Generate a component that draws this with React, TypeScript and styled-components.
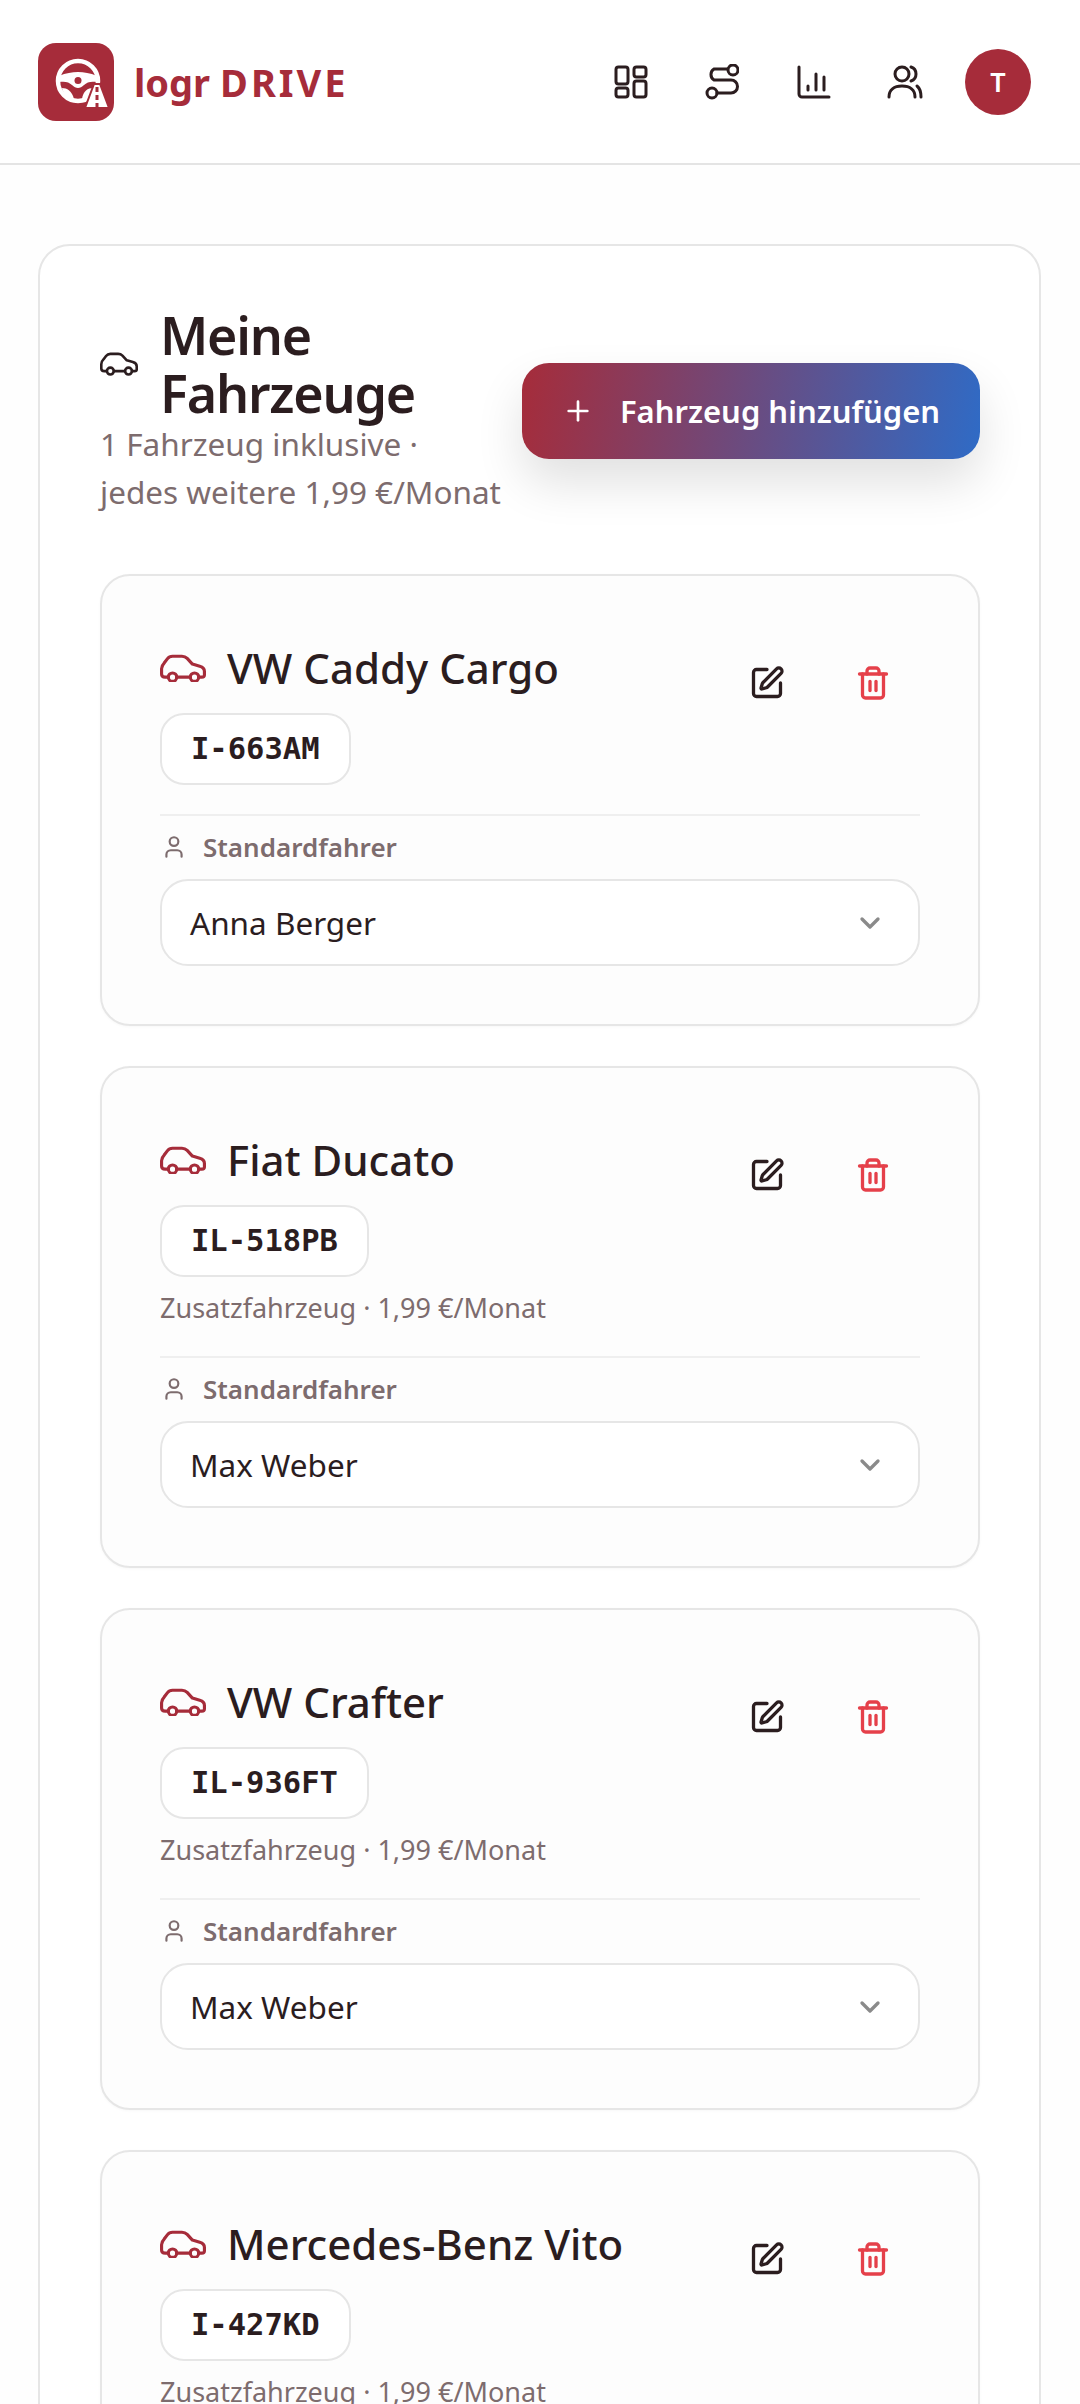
import React from 'react';
import styled, { createGlobalStyle } from 'styled-components';
import { ChevronDown, Plus, User, SquarePen, Trash2 } from 'lucide-react';

const GlobalStyle = createGlobalStyle`
  html, body {
    margin: 0;
    padding: 0;
    background: #fefefe;
    font-family: "Noto Sans", "Open Sans", sans-serif;
    color: #2b1d1f;
  }
  * { box-sizing: border-box; }
`;

const Page = styled.div`
  width: 1080px;
  height: 2404px;
  overflow: hidden;
`;

const Header = styled.header`
  height: 165px;
  background: #fff;
  border-bottom: 2px solid #e4e4e4;
  padding: 0 12px 0 38px;
  display: flex;
  align-items: center;
  justify-content: space-between;
`;

const Brand = styled.div`
  display: flex;
  align-items: center;
  gap: 20px;
`;

const LogoBox = styled.div`
  width: 76px;
  height: 78px;
  border-radius: 18px;
  background: #a62c3a;
  display: flex;
`;

const BrandName = styled.div`
  font-size: 38px;
  font-weight: 700;
  color: #a62c3a;
  display: flex;
  gap: 10px;
  line-height: 1;
`;

const BrandWide = styled.span`
  letter-spacing: 3px;
`;

const Nav = styled.nav`
  display: flex;
  align-items: center;
`;

const NavIcon = styled.button`
  width: 91.5px;
  height: 66px;
  border: 0;
  padding: 0;
  background: none;
  color: #2b1d1f;
  display: flex;
  align-items: center;
  justify-content: center;
`;

const Avatar = styled.div`
  width: 66px;
  height: 66px;
  margin-left: 14px;
  margin-right: 37px;
  border-radius: 50%;
  background: #a62c3a;
  color: #fff;
  font-size: 27px;
  font-weight: 600;
  display: flex;
  align-items: center;
  justify-content: center;
`;

const Main = styled.main`
  padding: 79px 39px 0 38px;
`;

const Panel = styled.section`
  background: #fff;
  border: 2px solid #e6e6e6;
  border-radius: 32px;
  padding: 60px 59px 60px 60px;
  display: flex;
  flex-direction: column;
  gap: 40px;
`;

const PanelHead = styled.div`
  display: flex;
  align-items: center;
  justify-content: space-between;
  gap: 20px;
  margin-bottom: 18px;
`;

const HeadText = styled.div`
  width: 420px;
`;

const TitleRow = styled.div`
  display: flex;
  align-items: center;
  gap: 22px;
`;

const HeadCar = styled.span`
  display: flex;
  flex-shrink: 0;
`;

const Title = styled.h1`
  margin: 0;
  font-size: 52px;
  font-weight: 600;
  line-height: 58px;
  letter-spacing: -1.2px;
`;

const Subtitle = styled.p`
  margin: -2px 0 0;
  font-size: 31.5px;
  line-height: 48px;
  color: #7d6c6e;
`;

const AddButton = styled.button`
  width: 458px;
  height: 96px;
  flex-shrink: 0;
  border: 0;
  border-radius: 27px;
  background: linear-gradient(100deg, #a62c3a 0%, #2f6bc6 100%);
  box-shadow: 0 24px 48px rgba(0, 0, 0, 0.12);
  color: #fff;
  font: 600 31px "Noto Sans", sans-serif;
  display: flex;
  align-items: center;
  justify-content: center;
  gap: 26px;
`;

const Card = styled.article`
  background: #fdfdfd;
  border: 2px solid #e6e6e6;
  border-radius: 30px;
  box-shadow: 0 1px 3px rgba(0, 0, 0, 0.03);
  padding: 62px 58px 58px;
`;

const CardTop = styled.div`
  display: flex;
  justify-content: space-between;
  align-items: flex-start;
`;

const NameRow = styled.div`
  display: flex;
  align-items: center;
  gap: 21px;
`;

const Name = styled.h2`
  margin: 0;
  font-size: 42px;
  font-weight: 500;
  line-height: 60px;
`;

const Actions = styled.div`
  display: flex;
  align-items: center;
  gap: 70px;
  margin: 27px 29px 0 0;
`;

const ActionButton = styled.button<{ $danger?: boolean }>`
  border: 0;
  padding: 0;
  background: none;
  display: flex;
  color: ${p => (p.$danger ? '#e5404a' : '#2b1d1f')};
`;

const Plate = styled.div`
  display: inline-block;
  margin-top: 12px;
  height: 72px;
  line-height: 68px;
  padding: 0 29px;
  background: #fff;
  border: 2px solid #e6e6e6;
  border-radius: 24px;
  font-family: "DejaVu Sans Mono", monospace;
  font-size: 30.5px;
  font-weight: 700;
`;

const Extra = styled.p`
  margin: 12px 0 0;
  font-size: 27px;
  line-height: 38px;
  color: #7d6c6e;
`;

const Divider = styled.hr`
  margin: 29px 0 0;
  border: 0;
  border-top: 2px solid #efefef;
`;

const DriverLabel = styled.div`
  margin-top: 13px;
  display: flex;
  align-items: center;
  gap: 16px;
  font-size: 26px;
  font-weight: 600;
  line-height: 36px;
  color: #7d6c6e;
`;

const LabelIcon = styled.span`
  display: flex;
  margin-left: 1px;
`;

const Select = styled.div`
  margin-top: 14px;
  height: 87px;
  padding: 0 32px 0 28px;
  background: #fff;
  border: 2px solid #e6e6e6;
  border-radius: 28px;
  font-size: 31.5px;
  display: flex;
  align-items: center;
  justify-content: space-between;
  color: #2b1d1f;
`;

const CarIcon = ({ size, color }: { size: number; color: string }) => (
  <svg width={size} height={size * 0.62} viewBox="0 0 44 27" fill="none" stroke={color} strokeWidth="3" strokeLinecap="round" strokeLinejoin="round">
    <path d="M8 22H5c-2 0-3.500-1-3.500-3v-5c0-2 1-4 2.500-5.500l3-4C8.500 2.500 10 2 12 2h9c2 0 3.500.5 5 2l5 5.500 7 2c3 .8 4.500 2.500 4.500 5V20c0 1.500-1 2-2.500 2h-3" />
    <circle cx="12" cy="22" r="4" />
    <circle cx="33" cy="22" r="4" />
    <path d="M16 22h13" />
  </svg>
);

const LogoMark = () => (
  <svg width="76" height="78" viewBox="0 0 76 78" fill="none">
    <circle cx="40" cy="38" r="20" stroke="#fff" strokeWidth="4.500" />
    <path d="M21 33c7-3 13-4 19-4s12 1 19 4v6c-6-1-10 0-13 3-2 2-4 3-6 3s-4-1-6-3c-3-3-7-4-13-3z" fill="#fff" />
    <circle cx="40" cy="37.500" r="3.500" fill="#a62c3a" />
    <path d="M24 45c5 0 10 3 12 11-6-1-11-5-12-11z" fill="#fff" />
    <path d="M55 45c-5 0-10 3-11 11 5-1 10-5 11-11z" fill="#fff" />
    <path d="M47 65l9-24h6l9 24z" fill="#fff" stroke="#a62c3a" strokeWidth="2" />
    <path d="M59 44v5M59 52v5M59 60v5" stroke="#a62c3a" strokeWidth="3" />
  </svg>
);

const GridIcon = () => (
  <svg width="34" height="34" viewBox="0 0 34 34" fill="none" stroke="currentColor" strokeWidth="3">
    <rect x="2" y="2" width="12" height="17" rx="2.500" />
    <rect x="20" y="2" width="12" height="10" rx="2.500" />
    <rect x="2" y="23" width="12" height="9" rx="2.500" />
    <rect x="20" y="16" width="12" height="16" rx="2.500" />
  </svg>
);

const RouteIcon = () => (
  <svg width="34" height="36" viewBox="0 0 34 36" fill="none" stroke="currentColor" strokeWidth="3" strokeLinecap="round">
    <circle cx="7" cy="29" r="5" />
    <circle cx="28" cy="6" r="5" />
    <path d="M12 29h14a6.500 6.500 0 0 0 0-13H9A6.500 6.500 0 0 1 9 5h13" />
  </svg>
);

const ChartIcon = () => (
  <svg width="34" height="34" viewBox="0 0 34 34" fill="none" stroke="currentColor" strokeWidth="3" strokeLinecap="round">
    <path d="M2 2v27a3 3 0 0 0 3 3h27" />
    <path d="M11 21v4M19 9v16M27 12v13" />
  </svg>
);

const UsersIcon = () => (
  <svg width="36" height="34" viewBox="0 0 36 34" fill="none" stroke="currentColor" strokeWidth="3" strokeLinecap="round">
    <circle cx="15" cy="9" r="7" />
    <path d="M2 32c0-7 5-11 13-11s13 4 13 11" />
    <path d="M24 2c3 1 5 4 5 7s-2 6-5 7" />
    <path d="M30 21c2.500 2 4 6 4 11" />
  </svg>
);

const vehicles = [
  { name: 'VW Caddy Cargo', plate: 'I-663AM', driver: 'Anna Berger', extra: false },
  { name: 'Fiat Ducato', plate: 'IL-518PB', driver: 'Max Weber', extra: true },
  { name: 'VW Crafter', plate: 'IL-936FT', driver: 'Max Weber', extra: true },
  { name: 'Mercedes-Benz Vito', plate: 'I-427KD', driver: 'Max Weber', extra: true },
];

const App = () => {
  return (
    <Page>
      <GlobalStyle />
      <Header>
        <Brand>
          <LogoBox>
            <LogoMark />
          </LogoBox>
          <BrandName>
            <span>logr</span>
            <BrandWide>DRIVE</BrandWide>
          </BrandName>
        </Brand>
        <Nav>
          <NavIcon><GridIcon /></NavIcon>
          <NavIcon><RouteIcon /></NavIcon>
          <NavIcon><ChartIcon /></NavIcon>
          <NavIcon><UsersIcon /></NavIcon>
          <Avatar>T</Avatar>
        </Nav>
      </Header>
      <Main>
        <Panel>
          <PanelHead>
            <HeadText>
              <TitleRow>
                <HeadCar><CarIcon size={38} color="#2b1d1f" /></HeadCar>
                <Title>Meine Fahrzeuge</Title>
              </TitleRow>
              <Subtitle>1 Fahrzeug inklusive · jedes weitere 1,99 €/Monat</Subtitle>
            </HeadText>
            <AddButton>
              <Plus size={32} strokeWidth={2} />
              Fahrzeug hinzufügen
            </AddButton>
          </PanelHead>
          {vehicles.map(vehicle => (
            <Card key={vehicle.plate}>
              <CardTop>
                <NameRow>
                  <CarIcon size={46} color="#a62c3a" />
                  <Name>{vehicle.name}</Name>
                </NameRow>
                <Actions>
                  <ActionButton><SquarePen size={36} strokeWidth={2.2} /></ActionButton>
                  <ActionButton $danger><Trash2 size={36} strokeWidth={2.2} /></ActionButton>
                </Actions>
              </CardTop>
              <Plate>{vehicle.plate}</Plate>
              {vehicle.extra && <Extra>Zusatzfahrzeug · 1,99 €/Monat</Extra>}
              <Divider />
              <DriverLabel>
                <LabelIcon><User size={26} strokeWidth={2} /></LabelIcon>
                Standardfahrer
              </DriverLabel>
              <Select>
                {vehicle.driver}
                <ChevronDown size={32} color="#8a8a8a" strokeWidth={2.5} />
              </Select>
            </Card>
          ))}
        </Panel>
      </Main>
    </Page>
  );
};

export default App;
